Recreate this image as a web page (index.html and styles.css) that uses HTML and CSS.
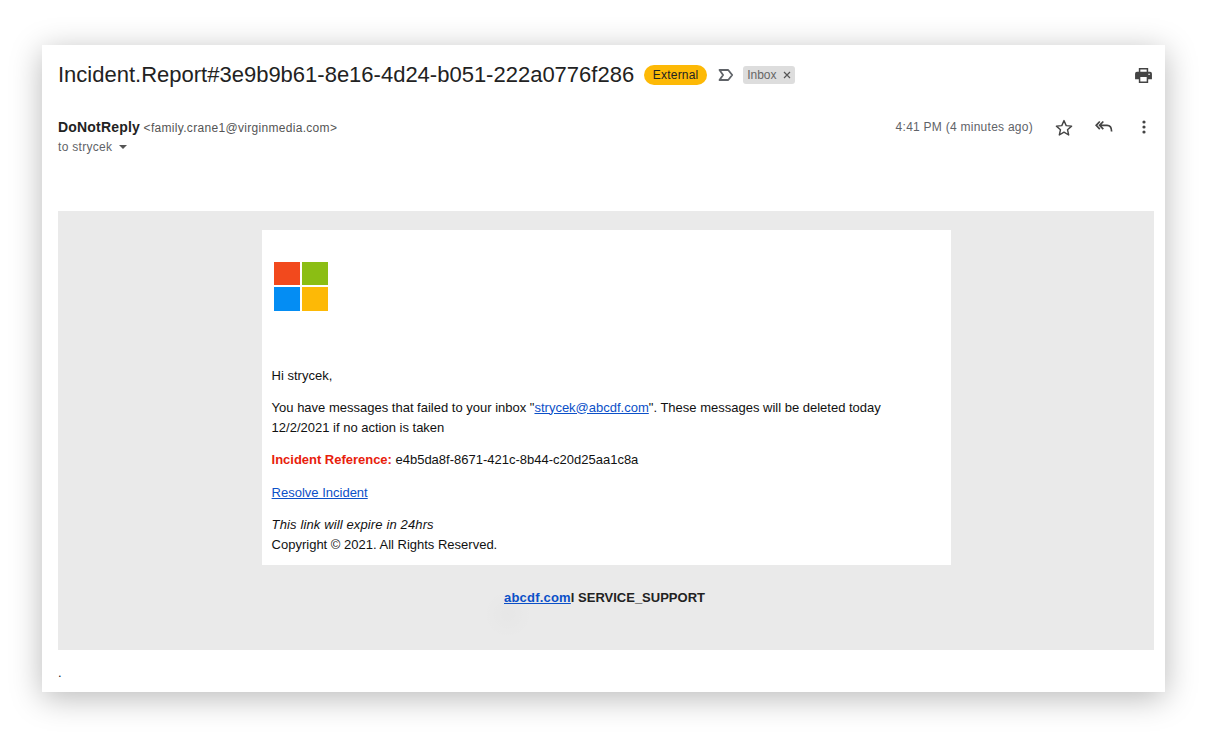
FILE: index.html
```html
<!DOCTYPE html>
<html lang="en">
<head>
<meta charset="utf-8">
<title>Incident Report</title>
<link rel="stylesheet" href="styles.css">
</head>
<body>
<main class="card">
  <header class="subject-row">
    <h1 class="subject">Incident.Report#3e9b9b61-8e16-4d24-b051-222a0776f286</h1>
    <span class="badge">External</span>
    <svg class="label-icon" width="16" height="12" viewBox="0 0 16 12"><path d="M1.5 1h8.7l4 5-4 5H1.5l3.6-5z" fill="none" stroke="#5f6368" stroke-width="1.8" stroke-linejoin="round"/></svg>
    <span class="chip">Inbox <svg class="chip-x" width="8" height="8" viewBox="0 0 8 8"><path d="M1 1l6 6M7 1L1 7" stroke="#555" stroke-width="1.2"/></svg></span>
    <svg class="print" width="17" height="15" viewBox="0 0 18 16"><path fill="#444" d="M4 0h10v4h2a2 2 0 0 1 2 2v6h-4v4H4v-4H0V6a2 2 0 0 1 2-2h2zM5.6 1.5V4h6.8V1.5zM5.6 9.5v5h6.8v-5zM14 6v1.3h2V6z" fill-rule="evenodd"/></svg>
  </header>
  <section class="meta-row">
    <div class="sender">
      <div><strong class="name">DoNotReply</strong> <span class="addr">&lt;family.crane1@virginmedia.com&gt;</span></div>
      <div class="to">to strycek <span class="caret"></span></div>
    </div>
    <div class="actions">
      <span class="time">4:41 PM (4 minutes ago)</span>
      <svg class="star" width="18" height="17" viewBox="0 0 18 17"><path d="M9 1.6l2.2 5 5.4.5-4.1 3.6 1.2 5.3L9 13.2 4.3 16l1.2-5.3L1.4 7.1l5.4-.5z" fill="none" stroke="#444" stroke-width="1.4" stroke-linejoin="round"/></svg>
      <svg class="reply" width="18" height="14" viewBox="0 0 18 14"><path d="M4.8 1.5L1.2 5.3l3.6 3.8M8.3 1.5L4.6 5.3l3.7 3.8M4.6 5.3H12c3 0 4.6 2 4.6 6.2" fill="none" stroke="#444" stroke-width="1.7"/></svg>
      <svg class="more" width="4" height="14" viewBox="0 0 4 14"><circle cx="2" cy="2" r="1.6" fill="#444"/><circle cx="2" cy="7" r="1.6" fill="#444"/><circle cx="2" cy="12" r="1.6" fill="#444"/></svg>
    </div>
  </section>
  <section class="mail-bg">
    <article class="mail">
      <svg class="logo" width="54" height="49" viewBox="0 0 54 49"><rect width="26" height="23" fill="#f2491d"/><rect x="28" width="26" height="23" fill="#8bbe14"/><rect y="25" width="26" height="24" fill="#048df3"/><rect x="28" y="25" width="26" height="24" fill="#fdb906"/></svg>
      <p class="para first">Hi strycek,</p>
      <p class="para">You have messages that failed to your inbox "<a href="#">strycek@abcdf.com</a>". These messages will be deleted today<br>12/2/2021 if no action is taken</p>
      <p class="para"><strong class="red">Incident Reference:</strong> e4b5da8f-8671-421c-8b44-c20d25aa1c8a</p>
      <p class="para"><a href="#">Resolve Incident</a></p>
      <p class="closing"><em class="expire">This link will expire in 24hrs</em><br>Copyright © 2021. All Rights Reserved.</p>
    </article>
    <p class="support"><a href="#">abcdf.com</a>l SERVICE_SUPPORT</p>
    <div class="smudge"></div>
  </section>
  <p class="dot">.</p>
</main>
</body>
</html>
```
FILE: styles.css
```css
* { box-sizing: border-box; }
html, body { margin: 0; height: 100%; }
body {
  background: #fff;
  font-family: "Liberation Sans", Arial, sans-serif;
  color: #222;
  padding: 45px 46px 47px 42px;
  overflow: hidden;
}
.card {
  width: 1123px;
  height: 647px;
  background: #fff;
  box-shadow: 0 6px 30px rgba(0,0,0,.28);
  padding: 0 11px 0 16px;
}
.subject-row {
  display: flex;
  align-items: center;
  height: 60px;
}
.subject {
  margin: 0;
  font-size: 22px;
  font-weight: 400;
  color: #222;
  white-space: nowrap;
}
.badge {
  margin-left: 10px;
  background: #fdb906;
  border-radius: 10px;
  height: 20px;
  width: 63px;
  font-size: 12px;
  letter-spacing: .2px;
  line-height: 20px;
  text-align: center;
  color: #222;
}
.label-icon { margin-left: 11px; }
.chip {
  margin-left: 9px;
  background: #dddddd;
  border-radius: 3px;
  height: 18px;
  width: 52px;
  padding-left: 4px;
  font-size: 12px;
  line-height: 18px;
  color: #666;
}
.chip-x { margin-left: 3px; }
.print { margin-left: auto; margin-right: 2px; }
.meta-row {
  display: flex;
  justify-content: space-between;
  height: 106px;
  padding-top: 13px;
}
.name { font-size: 14px; color: #222; letter-spacing: .2px; }
.addr { font-size: 12px; color: #555; letter-spacing: .31px; margin-left: -1px; }
.to { margin-top: 4px; font-size: 12px; color: #5f6368; letter-spacing: .3px; }
.caret {
  display: inline-block;
  margin-left: 3px;
  vertical-align: 2px;
  border: 4px solid transparent;
  border-top: 4px solid #555;
  border-bottom: 0;
}
.actions {
  display: flex;
  align-items: center;
  height: 18px;
  padding-right: 8px;
}
.time { font-size: 12px; color: #5f6368; letter-spacing: .26px; }
.star { margin-left: 22px; }
.reply { margin-left: 22px; }
.more { margin-left: 29px; }
.mail-bg {
  background: #eaeaea;
  height: 439px;
  padding-top: 19px;
  position: relative;
}
.smudge {
  position: absolute;
  left: 425px;
  top: 378px;
  width: 50px;
  height: 50px;
  background: radial-gradient(circle, rgba(0,0,0,.015), rgba(0,0,0,0) 70%);
}
.mail {
  width: 689px;
  height: 335px;
  margin-left: 204px;
  background: #fff;
  padding: 32px 12px 0 9.6px;
  font-size: 13px;
  line-height: 20px;
  color: #111;
}
.logo { display: block; margin-left: 2.4px; margin-bottom: 55px; }
.para { margin: 0 0 12.5px; }
.first { margin-bottom: 11.5px; }
.expire { letter-spacing: .13px; }
.closing { margin: 0; }
a { color: #0b50c8; }
.red { color: #e8200b; letter-spacing: -.02px; }
.support {
  margin: 23px 0 0;
  padding-left: 446px;
  font-size: 13px;
  font-weight: 700;
  line-height: 20px;
  color: #222;
}
.support a { letter-spacing: .2px; }
.dot { margin: 13px 0 0; font-size: 13px; line-height: 20px; }
```
